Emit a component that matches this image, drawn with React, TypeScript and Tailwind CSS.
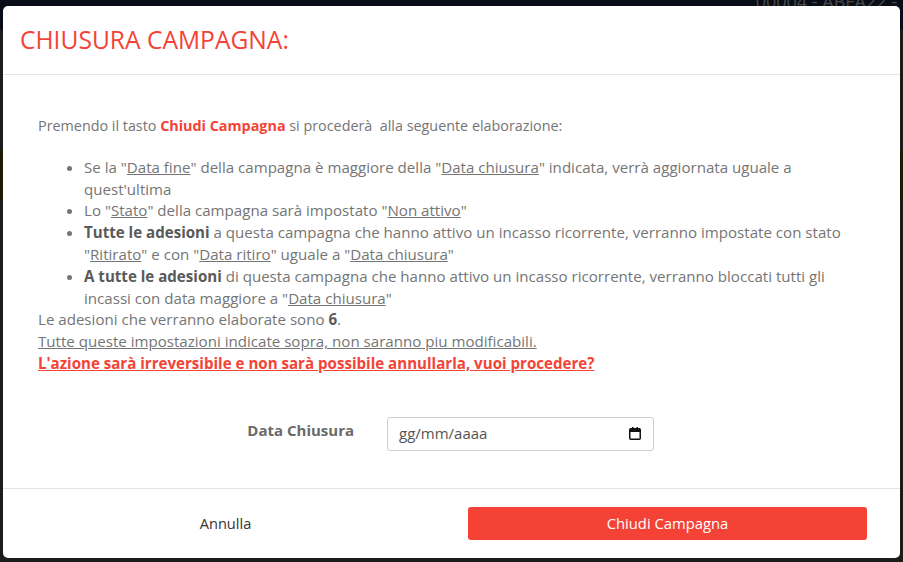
import React from "react";

function CalendarIcon() {
  return (
    <svg width="12" height="13" viewBox="0 0 12 13" fill="none">
      <rect x="0.75" y="1.75" width="10.5" height="10.5" rx="1" stroke="#111" strokeWidth="1.5" />
      <rect x="1" y="2" width="10" height="3" fill="#111" />
      <rect x="3" y="0" width="1.5" height="2.5" fill="#111" />
      <rect x="7.5" y="0" width="1.5" height="2.5" fill="#111" />
    </svg>
  );
}

export default function App() {
  return (
    <div className="relative h-[562px] w-[903px] overflow-hidden bg-[#1c1c1c] font-['Open_Sans',sans-serif]">
      {/* page behind the overlay */}
      <div className="h-[30px] bg-[#080d17]" />
      <div className="absolute right-[6px] top-[-12px] text-[18px] text-[#4a4a4a]">00004 - ABFA22 -</div>
      <div className="mt-[120px] h-[50px] bg-[#1f1a06]" />

      {/* modal */}
      <div className="absolute left-[3px] top-[6px] flex h-[552px] w-[897px] flex-col rounded-[5px] bg-white">
        <div className="flex h-[69px] items-center border-b border-[#e5e5e5] px-[17px]">
          <h1 className="text-[24.6px] leading-none text-[#f44336]">CHIUSURA CAMPAGNA:</h1>
        </div>

        <div className="flex-1 px-[35px] pt-[40px] text-[15.1px] leading-[21.8px] text-[#757575]">
          <p className="text-[14.35px]">
            Premendo il tasto <b className="text-[#f44336]">Chiudi Campagna</b> si procederà&nbsp; alla seguente elaborazione:
          </p>
          <ul className="mt-[20px] list-disc pl-[46px] marker:text-[#757575]">
            <li>
              Se la "<u>Data fine</u>" della campagna è maggiore della "<u>Data chiusura</u>" indicata, verrà aggiornata uguale a quest'ultima
            </li>
            <li>
              Lo "<u>Stato</u>" della campagna sarà impostato "<u>Non attivo</u>"
            </li>
            <li>
              <b className="text-[#5a5a5a]">Tutte le adesioni</b> a questa campagna che hanno attivo un incasso ricorrente, verranno impostate con stato "<u>Ritirato</u>" e con "<u>Data ritiro</u>" uguale a "<u>Data chiusura</u>"
            </li>
            <li>
              <b className="text-[#5a5a5a]">A tutte le adesioni</b> di questa campagna che hanno attivo un incasso ricorrente, verranno bloccati tutti gli incassi con data maggiore a "<u>Data chiusura</u>"
            </li>
          </ul>
          <p>
            Le adesioni che verranno elaborate sono <b className="text-[#5a5a5a]">6</b>.
          </p>
          <p className="underline">Tutte queste impostazioni indicate sopra, non saranno piu modificabili.</p>
          <p className="font-bold text-[#f44336] underline">L'azione sarà irreversibile e non sarà possibile annullarla, vuoi procedere?</p>

          <div className="mt-[42px] grid grid-cols-[316px_267px] gap-x-[33px]">
            <label className="mt-[3px] text-right text-[15px] font-bold text-[#6a6a6a]">Data Chiusura</label>
            <div className="flex h-[34px] items-center justify-between rounded-[3px] border border-[#cfcfcf] pl-[11px] pr-[12px] text-[15px] text-[#555]">
              <span>gg/mm/aaaa</span>
              <CalendarIcon />
            </div>
          </div>
        </div>

        <div className="flex h-[70px] items-center gap-[43px] border-t border-[#e5e5e5] pl-[23px] pr-[33px]">
          <button className="flex-1 text-center text-[14.6px] text-[#333]">Annulla</button>
          <button className="h-[33px] w-[399px] rounded-[3px] bg-[#f44336] text-[14.8px] text-white">Chiudi Campagna</button>
        </div>
      </div>
    </div>
  );
}
